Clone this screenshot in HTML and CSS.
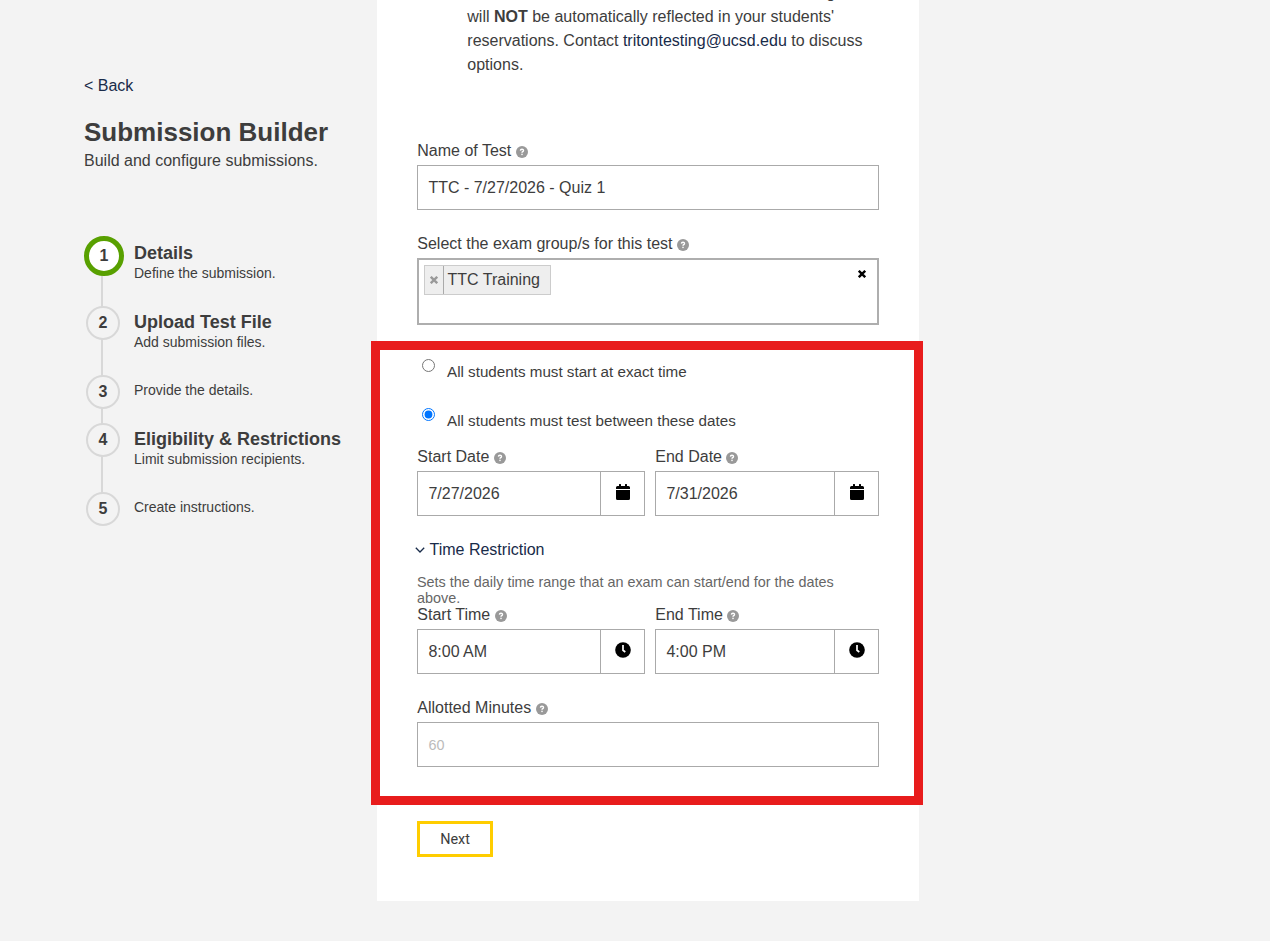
FILE: index.html
```html
<!DOCTYPE html>
<html lang="en">
<head>
  <meta charset="UTF-8" />
  <meta name="viewport" content="width=device-width, initial-scale=1.0"/>
  <title>Submission Builder</title>
  <link rel="stylesheet" href="styles.css">
</head>
<body>
  <svg class="sprite" aria-hidden="true">
    <symbol id="help" viewBox="0 0 12 12">
      <circle cx="6" cy="6" r="6" fill="#999"/>
      <path d="M4.4 4.6 C4.5 2.7 7.6 2.8 7.5 4.6 C7.4 5.6 6 5.7 6 6.8" fill="none" stroke="#fff" stroke-width="1.4"/>
      <rect x="5.3" y="7.7" width="1.4" height="1.4" fill="#fff"/>
    </symbol>
    <symbol id="calendar" viewBox="0 0 14 16">
      <path d="M0 4.9V3.5A1.5 1.5 0 0 1 1.5 2H3V.4A.4.4 0 0 1 3.4 0h1.2a.4.4 0 0 1 .4.4V2h4V.4a.4.4 0 0 1 .4-.4h1.2a.4.4 0 0 1 .4.4V2h1.5A1.5 1.5 0 0 1 14 3.5v1.4zM0 6h14v8.5a1.5 1.5 0 0 1-1.5 1.5h-11A1.5 1.5 0 0 1 0 14.5z"/>
    </symbol>
    <symbol id="clock" viewBox="0 0 16 16">
      <circle cx="8" cy="8" r="7.8"/>
      <path d="M8 3v5.3l2.3 1.7" fill="none" stroke="#fff" stroke-width="1.7"/>
    </symbol>
    <symbol id="cross" viewBox="0 0 8 8">
      <path d="M.8 .8l6.4 6.4M7.2 .8L.8 7.2" fill="none" stroke="currentColor" stroke-width="2.4"/>
    </symbol>
  </svg>
  <div class="page">
    <aside class="sidebar">
      <a class="back" href="#">&lt; Back</a>
      <h1>Submission Builder</h1>
      <p class="subtitle">Build and configure submissions.</p>
      <ol class="steps">
        <li class="step active"><span class="num">1</span><div class="info"><h2>Details</h2><p>Define the submission.</p></div></li>
        <li class="step"><span class="num">2</span><div class="info"><h2>Upload Test File</h2><p>Add submission files.</p></div></li>
        <li class="step short"><span class="num">3</span><div class="info"><p>Provide the details.</p></div></li>
        <li class="step"><span class="num">4</span><div class="info"><h2>Eligibility &amp; Restrictions</h2><p>Limit submission recipients.</p></div></li>
        <li class="step short"><span class="num">5</span><div class="info"><p>Create instructions.</p></div></li>
      </ol>
    </aside>
    <main class="panel">
      <div class="notice">
        <div class="cut">g</div>
        will <b>NOT</b> be automatically reflected in your students' reservations. Contact <a href="#">tritontesting@ucsd.edu</a> to discuss options.
      </div>
      <form>
        <div class="field">
          <label for="name">Name of Test <svg class="help"><use href="#help"/></svg></label>
          <input class="input" type="text" id="name" value="TTC - 7/27/2026 - Quiz 1">
        </div>
        <div class="field">
          <label>Select the exam group/s for this test <svg class="help"><use href="#help"/></svg></label>
          <div class="multi">
            <span class="tag"><span class="remove"><svg><use href="#cross"/></svg></span>TTC Training</span>
            <svg class="clear"><use href="#cross"/></svg>
          </div>
        </div>
        <section class="highlight">
          <label class="choice"><input type="radio" name="mode"><span>All students must start at exact time</span></label>
          <label class="choice"><input type="radio" name="mode" checked><span>All students must test between these dates</span></label>
          <div class="pair dates">
            <div>
              <label for="sd">Start Date <svg class="help"><use href="#help"/></svg></label>
              <div class="picker"><input type="text" id="sd" value="7/27/2026"><button type="button"><svg class="cal"><use href="#calendar"/></svg></button></div>
            </div>
            <div>
              <label for="ed">End Date <svg class="help"><use href="#help"/></svg></label>
              <div class="picker"><input type="text" id="ed" value="7/31/2026"><button type="button"><svg class="cal"><use href="#calendar"/></svg></button></div>
            </div>
          </div>
          <a class="toggle" href="#"><svg viewBox="0 0 10 6"><path d="M.8.8L5 5 9.2.8" fill="none" stroke="currentColor" stroke-width="1.3"/></svg>Time Restriction</a>
          <p class="hint">Sets the daily time range that an exam can start/end for the dates above.</p>
          <div class="pair">
            <div>
              <label for="st">Start Time <svg class="help"><use href="#help"/></svg></label>
              <div class="picker"><input type="text" id="st" value="8:00 AM"><button type="button"><svg class="clk"><use href="#clock"/></svg></button></div>
            </div>
            <div>
              <label for="et">End Time <svg class="help"><use href="#help"/></svg></label>
              <div class="picker"><input type="text" id="et" value="4:00 PM"><button type="button"><svg class="clk"><use href="#clock"/></svg></button></div>
            </div>
          </div>
          <div class="field minutes">
            <label for="min">Allotted Minutes <svg class="help"><use href="#help"/></svg></label>
            <input class="input" type="text" id="min" placeholder="60">
          </div>
        </section>
        <button class="next" type="button">Next</button>
      </form>
    </main>
  </div>
</body>
</html>
```
FILE: styles.css
```css
* { box-sizing: border-box; }
body { margin: 0; background: #f3f3f3; color: #3d3d3d; font: 16px/24px "Liberation Sans", Arial, sans-serif; }
h1, h2, p, ol { margin: 0; padding: 0; }
a { color: #182b49; text-decoration: none; }
.sprite { display: none; }
.page { display: flex; height: 941px; overflow: hidden; padding-left: 84px; }

.sidebar { width: 293px; padding-top: 74px; }
.back { display: block; }
h1 { margin-top: 18px; font-size: 26px; line-height: 32px; }
.subtitle { padding-top: 1px; line-height: 24px; }
.steps { list-style: none; margin-top: 63px; }
.step { position: relative; display: flex; height: 69px; }
.step.short { height: 48px; }
.num { display: flex; align-items: center; justify-content: center; width: 34px; height: 34px; margin: 1px 14px 0 2px; border: 2px solid #d8d8d8; border-radius: 50%; background: #f3f3f3; font-weight: bold; z-index: 1; }
.active .num { width: 40px; height: 40px; margin: 0 10px 0 0; border: 5px solid #58a000; background: #fff; }
/* line down to the next circle */
.step:not(:last-child)::before { content: ""; position: absolute; left: 17px; top: 30px; bottom: -2px; width: 2px; background: #d8d8d8; }
.info { padding-top: 7px; white-space: nowrap; }
h2 { font-size: 18px; line-height: 20px; }
.info p { font-size: 14px; line-height: 20px; }
.short .info { padding-top: 6px; }

.panel { width: 542px; height: 901px; padding: 0 40px; background: #fff; }
.notice { margin: -19px 0 61px; padding-left: 50.3px; }
.cut { padding-left: 359px; }
label { display: block; height: 27px; padding-left: .3px; line-height: 26px; }
.help { width: 12px; height: 12px; vertical-align: -1.5px; }
.field { margin-bottom: 21px; }
input[type="text"] { display: block; width: 100%; height: 45px; padding: 0 10.4px; border: 1px solid #aaa; background: #fff; color: #3d3d3d; font: inherit; }
input::placeholder { color: #bbb; font-size: 14.4px; }
.multi { display: flex; justify-content: space-between; align-items: flex-start; height: 67px; padding: 5px; border: 2px solid #aeaeae; }
.tag { display: flex; height: 30px; padding-right: 10.5px; border: 1px solid #ccc; background: #eee; line-height: 28px; }
.remove { display: flex; align-items: center; justify-content: center; width: 19px; margin-right: 3.5px; border-right: 1px solid #aaa; color: #999; }
.remove svg { width: 8px; height: 8px; }
.clear { width: 8px; height: 8px; margin: 5px 6px 0 0; color: #000; }

.highlight { position: relative; height: 464px; margin: -5px -44px 16px -46px; padding: 0 35px 0 37px; border: 9px solid #e81c1c; }
.choice { display: flex; height: 49px; padding: 9px 0 0 5px; font-size: 15.2px; line-height: 24px; }
.choice input { flex: none; width: 13px; height: 13px; margin: 0 12px 0 0; }
.choice span { padding-top: 1px; }
.pair { display: grid; grid-template-columns: 228px 224px; column-gap: 10px; }
.dates { margin-top: -4px; }
.picker { display: flex; }
.picker button { flex: none; display: flex; align-items: center; justify-content: center; width: 45px; margin-left: -1px; padding: 0; border: 1px solid #aaa; background: #fff; }
.cal { width: 14px; height: 16px; margin-top: -4px; }
.clk { width: 16px; height: 16px; margin-top: -4px; }
.toggle { display: flex; align-items: center; height: 24px; margin: 22px 0 12px -2px; }
.toggle svg { width: 10px; height: 6px; margin-right: 4.5px; }
.hint { height: 28px; color: #666; font-size: 14.4px; line-height: 16px; }
.minutes { margin-top: 21px; }
.next { display: block; width: 76px; height: 36px; padding: 0; border: 3px solid #ffcd00; background: #fff; color: #3d3d3d; font: 14.4px Roboto, sans-serif; }
```
